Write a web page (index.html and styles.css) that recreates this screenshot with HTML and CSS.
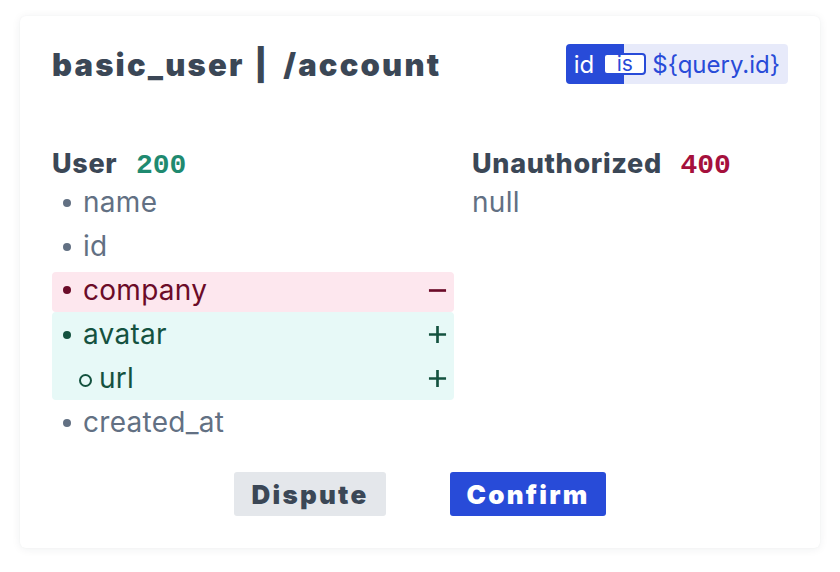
FILE: index.html
```html
<!DOCTYPE html>
<html>
<head>
<meta charset="utf-8">
<link rel="stylesheet" href="styles.css">
</head>
<body>
<div class="card">
  <div class="header">
    <h1 class="title">basic_user<span class="sep">|</span>/account</h1>
    <div class="badge">
      <span class="badge-key">id</span>
      <span class="badge-op">is</span>
      <span class="badge-val">${query.id}</span>
    </div>
  </div>
  <div class="cols">
    <div class="col">
      <h2 class="col-head">User <span class="code ok">200</span></h2>
      <ul class="fields">
        <li class="field">name</li>
        <li class="field">id</li>
        <li class="field removed">company<svg class="mark" viewBox="0 0 20 20"><path d="M1 10H19"/></svg></li>
        <li class="added-group">
          <div class="field added">avatar<svg class="mark" viewBox="0 0 20 20"><path d="M1 10H19M10 1V19"/></svg></div>
          <div class="field added sub">url<svg class="mark" viewBox="0 0 20 20"><path d="M1 10H19M10 1V19"/></svg></div>
        </li>
        <li class="field">created_at</li>
      </ul>
    </div>
    <div class="col">
      <h2 class="col-head">Unauthorized <span class="code err">400</span></h2>
      <div class="null">null</div>
    </div>
  </div>
  <div class="actions">
    <button class="btn btn-dispute">Dispute</button>
    <button class="btn btn-confirm">Confirm</button>
  </div>
</div>
</body>
</html>
```
FILE: styles.css
```css
* { box-sizing: border-box; }
html, body { margin: 0; padding: 0; background: #ffffff; }
body {
  font-family: Inter, "Noto Sans", sans-serif;
  padding: 16px 20px 24px;
}
.card {
  width: 800px;
  height: 532px;
  background: #fff;
  border-radius: 6px;
  box-shadow: 0 1px 10px rgba(30, 41, 59, 0.07), 0 0 2px rgba(30, 41, 59, 0.04);
  padding: 28px 32px 32px;
  display: flex;
  flex-direction: column;
}
.header {
  display: flex;
  justify-content: space-between;
  align-items: center;
  height: 40px;
}
.title {
  margin: 0;
  font-size: 31px;
  font-weight: 900;
  letter-spacing: 0.07em;
  color: #3b4756;
  display: flex;
  align-items: center;
}
.sep {
  margin: 0 14px 0 10px;
}
.badge {
  display: flex;
  align-items: center;
  height: 40px;
  padding: 0 8px 0 8px;
  border-radius: 4px;
  background: linear-gradient(to right, #284bd8 58px, #e7eafa 58px);
  font-size: 24px;
}
.badge-key { color: #fff; }
.badge-op {
  margin-left: 9px;
  width: 43px;
  height: 22px;
  background: #fff;
  border: 2px solid #284bd8;
  border-radius: 4px;
  color: #284bd8;
  font-size: 21px;
  line-height: 18px;
  text-align: center;
}
.badge-val { margin-left: 6px; color: #284bd8; }
.cols {
  display: grid;
  grid-template-columns: 402px 1fr;
  column-gap: 18px;
  margin-top: 66px;
}
.col-head {
  margin: 0;
  font-size: 27px;
  font-weight: 800;
  color: #3b4756;
  height: 28px;
  line-height: 28px;
  letter-spacing: 0.025em;
}
.code {
  font-family: "Liberation Mono", "DejaVu Sans Mono", monospace;
  font-size: 28px;
  font-weight: 700;
  letter-spacing: 0;
  margin-left: 12px;
}
.ok { color: #1f8a70; }
.err { color: #a5103c; }
.fields {
  list-style: none;
  margin: 2px 0 0;
  padding: 0;
}
.field {
  position: relative;
  height: 44px;
  line-height: 44px;
  padding-left: 31px;
  padding-right: 7px;
  font-size: 28px;
  letter-spacing: 0.01em;
  color: #627083;
  display: flex;
  justify-content: space-between;
  align-items: center;
}
.field::before {
  content: "";
  position: absolute;
  left: 11px;
  top: 19px;
  width: 8px;
  height: 8px;
  border-radius: 50%;
  background: currentColor;
}
.removed {
  margin-top: 4px;
  height: 40px;
  line-height: 36px;
  padding-bottom: 4px;
  background: #fde7ee;
  color: #6b0b28;
  border-radius: 4px;
}
.removed::before { top: 14px; }
.added-group {
  background: #e7f9f7;
  border-radius: 4px;
}
.added { color: #14523f; }
.sub { padding-left: 47px; }
.sub::before {
  left: 27px;
  top: 18px;
  width: 9px;
  height: 9px;
  background: transparent;
  border: 2px solid currentColor;
}
.mark {
  width: 19px;
  height: 19px;
  stroke: currentColor;
  stroke-width: 2.8;
  fill: none;
}
.null {
  font-size: 28px;
  letter-spacing: 0.01em;
  color: #627083;
  height: 44px;
  line-height: 44px;
  margin-top: 2px;
}
.actions {
  margin-top: auto;
  display: flex;
  justify-content: center;
  gap: 64px;
}
.btn {
  border: none;
  height: 44px;
  border-radius: 3px;
  font-family: Inter, "Noto Sans", sans-serif;
  font-size: 26px;
  font-weight: 900;
  letter-spacing: 0.085em;
  padding: 0;
}
.btn-dispute { background: #e4e7eb; color: #3b4756; width: 152px; }
.btn-confirm { background: #284bd8; color: #fff; width: 156px; }
```
